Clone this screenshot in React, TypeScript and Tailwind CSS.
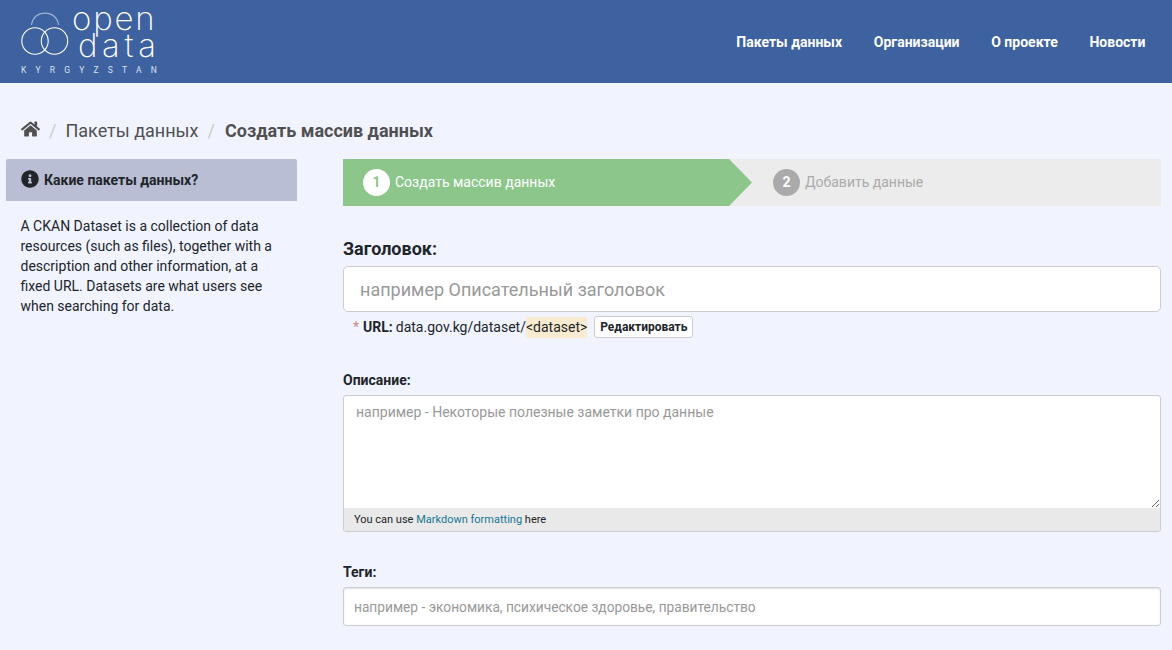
/**
 * Create dataset page
 * CKAN style form for the Kyrgyzstan open data portal
 */

import { FaHome, FaInfoCircle } from 'react-icons/fa';

const navigation = ['Пакеты данных', 'Организации', 'О проекте', 'Новости'];

function Logo() {
  return (
    <div className="flex flex-col pl-[21px] pt-[8px]">
      <div className="flex h-[57px] items-start">
        <svg width="48" height="48" viewBox="0 0 48 48" fill="none" className="mt-[4px] shrink-0">
          <path d="M10.5 13 C11.5 5.5 17 1.2 24 1.2 C31 1.2 36.5 5.5 37.5 13" stroke="#9fb3d6" strokeWidth="1.2" />
          <circle cx="14" cy="29" r="13.2" stroke="#fff" strokeWidth="1.1" />
          <circle cx="33.5" cy="29" r="13.2" stroke="#fff" strokeWidth="1.1" />
        </svg>
        <div className="-mt-[3px] ml-[3px] flex flex-col font-['Inter',sans-serif] text-[33px] leading-[27px] font-extralight text-white">
          <span className="tracking-[1.8px]">open</span>
          <span className="ml-[6px] tracking-[4.6px]">data</span>
        </div>
      </div>
      <span className="mt-[1px] text-[8.5px] leading-[8px] tracking-[9.2px] text-[#dbe3f1]">KYRGYZSTAN</span>
    </div>
  );
}

function Header() {
  return (
    <header className="flex h-[83px] justify-between bg-[#3e61a0]">
      <Logo />
      <nav className="flex gap-[31.7px] pt-[33px] pr-[26.6px] text-[14px] leading-[18px] font-bold text-white">
        {navigation.map((item) => (
          <a key={item}>{item}</a>
        ))}
      </nav>
    </header>
  );
}

function Breadcrumb() {
  return (
    <div className="flex h-[76px] items-start pt-[36px] pl-[21px] text-[18px] leading-[24px] text-[#505050]">
      <FaHome className="mt-[1px] h-[18px] w-[19px]" />
      <span className="mx-[9px] text-[#ccc]">/</span>
      <span>Пакеты данных</span>
      <span className="mr-[10px] ml-[9px] text-[#ccc]">/</span>
      <span className="font-bold">Создать массив данных</span>
    </div>
  );
}

function Sidebar() {
  return (
    <aside className="ml-[6px] w-[291px] shrink-0">
      <div className="flex h-[42px] items-center gap-[5px] rounded-t-[2px] bg-[#b9bed4] pl-[15px] text-[14px] font-bold text-[#212529]">
        <FaInfoCircle className="mb-[3px] h-[18px] w-[18px]" />
        <span className="mt-[1px]">Какие пакеты данных?</span>
      </div>
      <p className="mt-[15px] pr-[15px] pl-[14.5px] text-[14px] leading-[20px] text-[#212529]">
        A CKAN Dataset is a collection of data resources (such as files), together with a description and other
        information, at a fixed URL. Datasets are what users see when searching for data.
      </p>
    </aside>
  );
}

function Stages() {
  return (
    <div className="flex h-[47px] bg-[#ececec]">
      <div className="flex w-[409px] items-center bg-[#8cc68b] pl-[20px] text-[14px] text-white [clip-path:polygon(0_0,386px_0,100%_50%,386px_100%,0_100%)]">
        <span className="flex h-[27px] w-[27px] items-center justify-center rounded-full bg-white font-bold text-[#8cc68b]">
          1
        </span>
        <span className="ml-[5px]">Создать массив данных</span>
      </div>
      <div className="ml-[21px] flex items-center text-[14px] text-[#aaa]">
        <span className="flex h-[27px] w-[27px] items-center justify-center rounded-full bg-[#aaa] font-bold text-white">
          2
        </span>
        <span className="ml-[5px]">Добавить данные</span>
      </div>
    </div>
  );
}

function DatasetForm() {
  return (
    <section className="ml-[46px] w-[818px]">
      <Stages />

      <label className="mt-[32px] block text-[18px] leading-[22px] font-bold text-[#212529]">Заголовок:</label>
      <input
        placeholder="например Описательный заголовок"
        className="mt-[6px] block h-[46px] w-full rounded-[5px] border border-[#ccc] bg-white px-[16px] text-[18px] placeholder:text-[#999]"
      />
      <div className="mt-[4px] flex h-[22px] items-center pl-[10px] text-[14px] text-[#212529]">
        <span className="mr-[4px] text-[#c6898b]">*</span>
        <span className="mr-[3px] font-bold">URL:</span>
        <span>data.gov.kg/dataset/</span>
        <span className="bg-[#faebd0]">&lt;dataset&gt;</span>
        <button className="ml-[7px] flex h-[22px] w-[99px] items-center justify-center rounded-[3px] border border-[#ccc] bg-white text-[12px] font-bold">
          Редактировать
        </button>
      </div>

      <label className="mt-[32px] block text-[14px] leading-[20px] font-bold text-[#212529]">Описание:</label>
      <div className="mt-[5px] overflow-hidden rounded-[3px] border border-[#ccc] bg-white">
        <textarea
          placeholder="например - Некоторые полезные заметки про данные"
          className="block h-[112px] w-full resize-y px-[12px] py-[6px] text-[14px] leading-[20px] placeholder:text-[#999]"
        />
        <div className="flex h-[23px] items-center bg-[#e9e9e9] pt-[1px] pl-[10px] text-[11px] text-[#212529]">
          <span>
            You can use <a className="text-[#187794]">Markdown formatting</a> here
          </span>
        </div>
      </div>

      <label className="mt-[30px] block text-[14px] leading-[20px] font-bold text-[#212529]">Теги:</label>
      <input
        placeholder="например - экономика, психическое здоровье, правительство"
        className="mt-[5px] block h-[39px] w-full rounded-[3px] border border-[#ccc] bg-white px-[10px] text-[13.72px] shadow-[inset_0_1px_2px_rgba(0,0,0,0.12)] placeholder:text-[#999]"
      />
    </section>
  );
}

export default function App() {
  return (
    <div className="h-[650px] overflow-hidden bg-[#f1f4ff] font-['Roboto',sans-serif]">
      <Header />
      <Breadcrumb />
      <div className="flex">
        <Sidebar />
        <DatasetForm />
      </div>
    </div>
  );
}
